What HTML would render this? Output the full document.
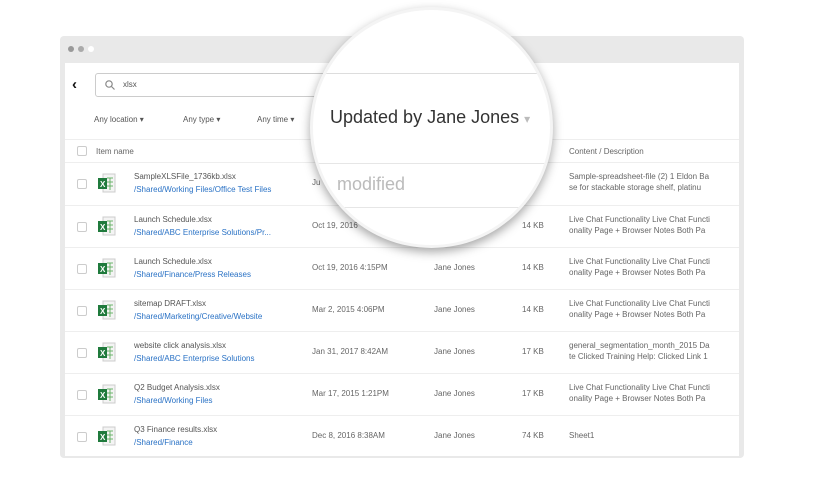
<!DOCTYPE html>
<html><head><style>
*{margin:0;padding:0;box-sizing:border-box}
body{width:832px;height:500px;background:#fff;font-family:"Liberation Sans",sans-serif;position:relative;overflow:hidden;color:#444}
.win{position:absolute;left:60px;top:36px;width:684px;height:422px;background:#e9e9e9;border-radius:4px}
.content{position:absolute;left:5px;top:27px;width:674px;height:393px;background:#fff}
.dot{position:absolute;top:10px;width:6px;height:6px;border-radius:50%}
.a{position:absolute;white-space:nowrap}
.s{font-size:8px;color:#555}
.l{font-size:8px;color:#2a72c5}
.g{font-size:8px;color:#666}
.cb{position:absolute;left:12px;width:10px;height:10px;border:1px solid #ccc;border-radius:2px;background:#fff}
.hr{position:absolute;left:0;width:674px;height:1px;background:#eee}
.xl{position:absolute;left:33px;width:18px;height:20px}
.r{position:absolute;left:0;width:674px;height:42px;border-top:1px solid #eee}
</style></head><body>
<div class="win">
<div class="dot" style="left:8px;background:#999"></div>
<div class="dot" style="left:18px;background:#aaa"></div>
<div class="dot" style="left:28px;background:#fff"></div>
<div class="content">
<div class="a" style="left:7px;top:13px;font-size:15px;font-weight:bold;color:#111">‹</div>
<div class="a" style="left:30px;top:10px;width:260px;height:24px;border:1px solid #ccc;border-radius:3px"></div>
<svg class="a" style="left:40px;top:17px" width="10" height="10"><circle cx="4" cy="4" r="3.2" fill="none" stroke="#888" stroke-width="1.2"/><line x1="6.5" y1="6.5" x2="9.5" y2="9.5" stroke="#888" stroke-width="1.2"/></svg>
<div class="a s" style="left:58px;top:17px">xlsx</div>
<div class="a s" style="left:29px;top:52px">Any location ▾</div>
<div class="a s" style="left:118px;top:52px">Any type ▾</div>
<div class="a s" style="left:192px;top:52px">Any time ▾</div>
<div class="hr" style="top:76px"></div>
<div class="cb" style="top:83px"></div>
<div class="a g" style="left:31px;top:84px">Item name</div>
<div class="a g" style="left:504px;top:84px">Content / Description</div>
<div class="hr" style="top:99px"></div>
</div></div>
<div style="position:absolute;left:65px;top:63px;width:674px;height:393px">
<div class="r" style="top:100px;border-top:none">
<div class="cb" style="top:16px"></div><svg class="xl" style="top:10px" viewBox="0 0 18 20"><rect x="5" y="1" width="12" height="18" fill="#f4f4f4" stroke="#ccc"/><path d="M9 5h6M9 9h6M9 13h6M12 5v12" stroke="#6bb36b"/><rect x="0" y="5" width="9" height="11" fill="#1f7a3c"/><text x="2" y="14" font-size="8" fill="#fff" font-family="Liberation Sans" font-weight="bold">X</text></svg>
<div class="a s" style="left:69px;top:9px">SampleXLSFile_1736kb.xlsx</div><div class="a l" style="left:69px;top:22px">/Shared/Working Files/Office Test Files</div>
<div class="a g" style="left:504px;top:9px">Sample-spreadsheet-file (2) 1 Eldon Ba</div><div class="a g" style="left:504px;top:20px">se for stackable storage shelf, platinu</div>
</div>
<div class="r" style="top:142px">
<div class="cb" style="top:16px"></div><svg class="xl" style="top:10px" viewBox="0 0 18 20"><rect x="5" y="1" width="12" height="18" fill="#f4f4f4" stroke="#ccc"/><path d="M9 5h6M9 9h6M9 13h6M12 5v12" stroke="#6bb36b"/><rect x="0" y="5" width="9" height="11" fill="#1f7a3c"/><text x="2" y="14" font-size="8" fill="#fff" font-family="Liberation Sans" font-weight="bold">X</text></svg>
<div class="a s" style="left:69px;top:9px">Launch Schedule.xlsx</div><div class="a l" style="left:69px;top:22px">/Shared/ABC Enterprise Solutions/Pr...</div>
<div class="a g" style="left:247px;top:15px">Oct 19, 2016</div><div class="a g" style="left:457px;top:15px">14 KB</div>
<div class="a g" style="left:504px;top:9px">Live Chat Functionality Live Chat Functi</div><div class="a g" style="left:504px;top:20px">onality Page + Browser Notes Both Pa</div>
</div>
<div class="r" style="top:184px">
<div class="cb" style="top:16px"></div><svg class="xl" style="top:10px" viewBox="0 0 18 20"><rect x="5" y="1" width="12" height="18" fill="#f4f4f4" stroke="#ccc"/><path d="M9 5h6M9 9h6M9 13h6M12 5v12" stroke="#6bb36b"/><rect x="0" y="5" width="9" height="11" fill="#1f7a3c"/><text x="2" y="14" font-size="8" fill="#fff" font-family="Liberation Sans" font-weight="bold">X</text></svg>
<div class="a s" style="left:69px;top:9px">Launch Schedule.xlsx</div><div class="a l" style="left:69px;top:22px">/Shared/Finance/Press Releases</div>
<div class="a g" style="left:247px;top:15px">Oct 19, 2016 4:15PM</div><div class="a g" style="left:369px;top:15px">Jane Jones</div><div class="a g" style="left:457px;top:15px">14 KB</div>
<div class="a g" style="left:504px;top:9px">Live Chat Functionality Live Chat Functi</div><div class="a g" style="left:504px;top:20px">onality Page + Browser Notes Both Pa</div>
</div>
<div class="r" style="top:226px">
<div class="cb" style="top:16px"></div><svg class="xl" style="top:10px" viewBox="0 0 18 20"><rect x="5" y="1" width="12" height="18" fill="#f4f4f4" stroke="#ccc"/><path d="M9 5h6M9 9h6M9 13h6M12 5v12" stroke="#6bb36b"/><rect x="0" y="5" width="9" height="11" fill="#1f7a3c"/><text x="2" y="14" font-size="8" fill="#fff" font-family="Liberation Sans" font-weight="bold">X</text></svg>
<div class="a s" style="left:69px;top:9px">sitemap DRAFT.xlsx</div><div class="a l" style="left:69px;top:22px">/Shared/Marketing/Creative/Website</div>
<div class="a g" style="left:247px;top:15px">Mar 2, 2015 4:06PM</div><div class="a g" style="left:369px;top:15px">Jane Jones</div><div class="a g" style="left:457px;top:15px">14 KB</div>
<div class="a g" style="left:504px;top:9px">Live Chat Functionality Live Chat Functi</div><div class="a g" style="left:504px;top:20px">onality Page + Browser Notes Both Pa</div>
</div>
<div class="r" style="top:268px">
<div class="cb" style="top:16px"></div><svg class="xl" style="top:10px" viewBox="0 0 18 20"><rect x="5" y="1" width="12" height="18" fill="#f4f4f4" stroke="#ccc"/><path d="M9 5h6M9 9h6M9 13h6M12 5v12" stroke="#6bb36b"/><rect x="0" y="5" width="9" height="11" fill="#1f7a3c"/><text x="2" y="14" font-size="8" fill="#fff" font-family="Liberation Sans" font-weight="bold">X</text></svg>
<div class="a s" style="left:69px;top:9px">website click analysis.xlsx</div><div class="a l" style="left:69px;top:22px">/Shared/ABC Enterprise Solutions</div>
<div class="a g" style="left:247px;top:15px">Jan 31, 2017 8:42AM</div><div class="a g" style="left:369px;top:15px">Jane Jones</div><div class="a g" style="left:457px;top:15px">17 KB</div>
<div class="a g" style="left:504px;top:9px">general_segmentation_month_2015 Da</div><div class="a g" style="left:504px;top:20px">te Clicked Training Help: Clicked Link 1</div>
</div>
<div class="r" style="top:310px">
<div class="cb" style="top:16px"></div><svg class="xl" style="top:10px" viewBox="0 0 18 20"><rect x="5" y="1" width="12" height="18" fill="#f4f4f4" stroke="#ccc"/><path d="M9 5h6M9 9h6M9 13h6M12 5v12" stroke="#6bb36b"/><rect x="0" y="5" width="9" height="11" fill="#1f7a3c"/><text x="2" y="14" font-size="8" fill="#fff" font-family="Liberation Sans" font-weight="bold">X</text></svg>
<div class="a s" style="left:69px;top:9px">Q2 Budget Analysis.xlsx</div><div class="a l" style="left:69px;top:22px">/Shared/Working Files</div>
<div class="a g" style="left:247px;top:15px">Mar 17, 2015 1:21PM</div><div class="a g" style="left:369px;top:15px">Jane Jones</div><div class="a g" style="left:457px;top:15px">17 KB</div>
<div class="a g" style="left:504px;top:9px">Live Chat Functionality Live Chat Functi</div><div class="a g" style="left:504px;top:20px">onality Page + Browser Notes Both Pa</div>
</div>
<div class="r" style="top:352px;height:41px">
<div class="cb" style="top:16px"></div><svg class="xl" style="top:10px" viewBox="0 0 18 20"><rect x="5" y="1" width="12" height="18" fill="#f4f4f4" stroke="#ccc"/><path d="M9 5h6M9 9h6M9 13h6M12 5v12" stroke="#6bb36b"/><rect x="0" y="5" width="9" height="11" fill="#1f7a3c"/><text x="2" y="14" font-size="8" fill="#fff" font-family="Liberation Sans" font-weight="bold">X</text></svg>
<div class="a s" style="left:69px;top:9px">Q3 Finance results.xlsx</div><div class="a l" style="left:69px;top:22px">/Shared/Finance</div>
<div class="a g" style="left:247px;top:15px">Dec 8, 2016 8:38AM</div><div class="a g" style="left:369px;top:15px">Jane Jones</div><div class="a g" style="left:457px;top:15px">74 KB</div>
<div class="a g" style="left:504px;top:15px">Sheet1</div>
</div>
<div class="a g" style="left:247px;top:115px">Ju</div><div class="a g" style="left:457px;top:115px">KB</div>
</div>
<div style="position:absolute;left:310px;top:7px;width:243px;height:241px;border-radius:50%;background:#fff;border:3px solid #f4f4f4;box-shadow:0 4px 10px rgba(0,0,0,.35);overflow:hidden">
<div style="position:absolute;left:0;top:63px;width:100%;height:1px;background:#ddd"></div>
<div class="a" style="left:17px;top:97px;font-size:18px;color:#333">Updated by Jane Jones <span style="color:#bbb;font-size:12px">▾</span></div>
<div style="position:absolute;left:0;top:153px;width:100%;height:1px;background:#e6e6e6"></div>
<div class="a" style="left:24px;top:164px;font-size:18px;color:#bbb">modified</div>
<div style="position:absolute;left:0;top:197px;width:100%;height:1px;background:#e6e6e6"></div>
</div>
</body></html>
